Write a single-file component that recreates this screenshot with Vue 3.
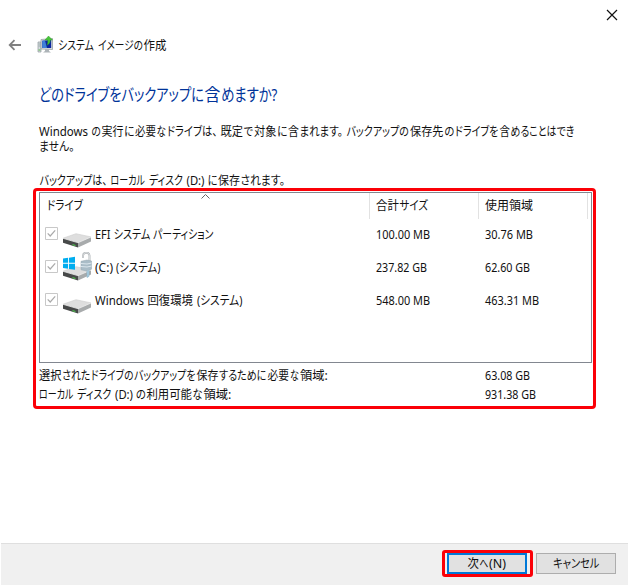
<script setup>
import { h } from 'vue'

// A run of text pieces: [x, width, text], condensed to the widths of the UI font.
const isLatin = (t) => /^[\x20-\x7e]+$/.test(t)
const Line = (props) =>
  h('svg', { class: 'line', width: props.width, height: props.height },
    [h('text', { y: props.base }, props.parts.map(([x, w, t]) =>
      h('tspan', { class: isLatin(t) ? 'latin' : 'jp', x, textLength: isLatin(t) ? w : w - 0.6, lengthAdjust: 'spacingAndGlyphs' }, t)))])
Line.props = ['parts', 'width', 'height', 'base']

const title = [[1, 36.5, 'システム'], [41, 45.5, 'イメージの'], [86.5, 23.5, '作成']]
const heading = [[0, 165.5, 'どのドライブをバックアップに'], [165.5, 16.5, '含'], [182, 57, 'めますか?']]
const intro1 = [
  [0, 49, 'Windows'], [52.5, 10, 'の'], [62.5, 22.5, '実行'], [85, 11, 'に'], [96, 21.5, '必要'],
  [117.5, 10, 'な'], [128, 51, 'ドライブは、'], [181.5, 23, '既定'], [204.5, 10, 'で'], [215, 23, '対象'],
  [238, 11, 'に'], [249, 11.5, '含'], [260.5, 44, 'まれます。'], [307.5, 63, 'バックアップの'], [371, 34, '保存先'],
  [405.5, 10.5, 'の'], [416, 44, 'ドライブを'], [460.5, 11, '含'], [471.5, 64.5, 'めることはでき'],
]
const intro2 = [[0, 36, 'ません。']]
const target = [
  [0.5, 68.5, 'バックアップは、'], [71.5, 35, 'ローカル'], [110, 34.5, 'ディスク'], [147.5, 18, '(D:)'],
  [168.5, 10.5, 'に'], [179, 22.5, '保存'], [201.5, 45, 'されます。'],
]
const headers = [
  [[0, 36.5, 'ドライブ']],
  [[-1, 23.5, '合計'], [22.5, 29, 'サイズ']],
  [[-1, 48.5, '使用領域']],
]
const drives = [
  { parts: [[0, 15.5, 'EFI'], [18.5, 37.5, 'システム'], [58, 61, 'パーティション']], size: '100.00 MB', sw: 54, used: '30.76 MB', uw: 48, os: false },
  { parts: [[0, 18, '(C:)'], [21, 45, '(システム)']], size: '237.82 GB', sw: 51, used: '62.60 GB', uw: 45, os: true },
  { parts: [[0, 49, 'Windows'], [52.5, 46, '回復環境'], [102, 46, '(システム)']], size: '548.00 MB', sw: 54, used: '463.31 MB', uw: 54, os: false },
]
const totals = [
  {
    parts: [
      [0, 23, '選択'], [23, 29, 'された'], [52, 43, 'ドライブの'], [95, 62, 'バックアップを'],
      [157.5, 22.5, '保存'], [180, 48, 'するために'], [228.5, 22, '必要'], [251, 9.5, 'な'], [261, 28.5, '領域:'],
    ],
    value: '63.08 GB', w: 45,
  },
  {
    parts: [
      [0, 35, 'ローカル'], [38, 35, 'ディスク'], [76, 18, '(D:)'], [97, 10.5, 'の'],
      [107.5, 46, '利用可能'], [153.5, 10.5, 'な'], [164.5, 28.5, '領域:'],
    ],
    value: '931.38 GB', w: 51,
  },
]
</script>

<template>
  <div class="window">
    <div class="caption">
      <svg width="12" height="12" viewBox="0 0 12 12"><path d="M1 1 11 11M11 1 1 11" stroke="#111" stroke-width="1.2" /></svg>
    </div>
    <header class="nav">
      <svg class="back" width="14" height="12" viewBox="0 0 14 12"><path d="M13 6H2M6.5 1.2 1.7 6l4.8 4.8" fill="none" stroke="#808080" stroke-width="1.8" /></svg>
      <svg class="app" width="17" height="18" viewBox="0 0 17 18">
        <path d="M1 6h3v10H1z" fill="#d5dadd" stroke="#8f999e" stroke-width=".7" />
        <path d="M1.5 8h2M1.5 10h2" stroke="#9aa" />
        <path d="M1.5 14h2" stroke="#58b947" />
        <path d="M4 3.5 15.5 2.5v11L4 13z" fill="#d9dcdd" stroke="#8d969a" stroke-width=".7" />
        <path d="M5.2 4.7 14.2 4v8H5.2z" fill="#0b25a0" />
        <path d="M5.2 4.7 8 4.5 10 12H5.2z" fill="#3f80d8" />
        <path d="M8 13h4v2l2 1.5H6L8 15z" fill="#adb4b8" />
        <path d="M11.5 0 15.5 4H13.3c0 2.5-1 4.3-3.4 5.2 1-1.6.9-3.2.8-5.2H8z" fill="#48c53b" stroke="#269421" stroke-width=".4" />
      </svg>
      <Line :parts="title" width="120" height="20" base="15" />
    </header>

    <main class="content">
      <h1><Line :parts="heading" width="260" height="26" base="18.5" /></h1>
      <p class="intro">
        <Line :parts="intro1" width="545" height="14" base="11" />
        <Line :parts="intro2" width="545" height="14" base="12" />
      </p>
      <p class="target"><Line :parts="target" width="300" height="16" base="11" /></p>
    </main>

    <section class="panel">
      <div class="list">
        <div class="row head">
          <div v-for="(c, i) in headers" :key="i" class="cell"><Line :parts="c" width="60" height="20" base="14" /></div>
          <svg class="sort" width="9" height="5" viewBox="0 0 9 5"><path d="M.5 4.5l4-4 4 4" fill="none" stroke="#666" /></svg>
        </div>
        <div v-for="d in drives" :key="d.size" class="row">
          <div class="drive">
            <svg class="check" width="13" height="13" viewBox="0 0 13 13"><path d="M.5.5h12v12H.5z" fill="#fff" stroke="#c8c8c8" /><path d="M2.7 6.4 5.2 9l5-5.7" fill="none" stroke="#aaa" stroke-width="1.2" /></svg>
            <svg class="disk" width="32" height="32" viewBox="0 0 32 32">
              <path d="M1 19.2 14 14.7l15 3.2-13 5.7z" fill="#dedede" />
              <path d="M1 19.2 14 14.7l15 3.2" fill="none" stroke="#cbcbcb" stroke-width=".6" />
              <path d="M1 19.2 16 23.6v4.9L1 23.8z" fill="#474949" />
              <path d="M16 23.6 29 17.9v4.6l-13 6z" fill="#a8abac" />
              <path d="M1 19.3 16 23.7 29 18" fill="none" stroke="#efefef" stroke-width=".8" />
              <path d="M10.5 25l3 .9v1.2l-3-.9z" fill="#4cc54b" />
              <g v-if="d.os">
                <path d="M1 6.5 6.1 5.8v5H1zm6-.8 6-.9v6H7zM1 11.7h5.1v5L1 16zm6 0h6v6l-6-.8z" fill="#00adef" />
                <path d="M21 6V4c0-4.5 6.5-4.5 6.5 0v5" fill="none" stroke="#b4b9bc" stroke-width="2" />
                <path d="M21 6V4c0-4.5 6.5-4.5 6.5 0v5" fill="none" stroke="#e8eaeb" stroke-width=".7" />
                <path d="M19 9.3 25 8l4.5 1v8.2L25 19l-6-1.2z" fill="#a9bcc7" stroke="#94a6b1" stroke-width=".5" />
                <path d="M19 11.5l6 .5 4.5-1M19 14.5l6 .5 4.5-1" fill="none" stroke="#dce7ee" />
                <path d="M25 19v6.5l2-1.2V18" fill="#afd2e4" stroke="#7fabc3" stroke-width=".6" />
              </g>
            </svg>
            <Line :parts="d.parts" width="200" height="20" base="15" />
          </div>
          <div class="value"><Line :parts="[[0, d.sw, d.size]]" width="60" height="20" base="15" /></div>
          <div class="value"><Line :parts="[[0, d.uw, d.used]]" width="60" height="20" base="15" /></div>
        </div>
      </div>
      <div class="totals">
        <div v-for="t in totals" :key="t.value" class="total">
          <Line :parts="t.parts" width="446" height="19" base="14" />
          <Line :parts="[[0, t.w, t.value]]" width="60" height="19" base="14" />
        </div>
      </div>
    </section>

    <footer class="actions">
      <div class="mark">
        <button class="btn next"><Line :parts="[[-0.5, 12, '次'], [11.5, 9.5, 'へ'], [21, 17, '(N)']]" width="39" height="17" base="13" /></button>
      </div>
      <button class="btn"><Line :parts="[[0, 47, 'キャンセル']]" width="46" height="17" base="13" /></button>
    </footer>
  </div>
</template>

<style>
body { background: #fff; }
.line { display: block; flex: none; fill: currentColor; overflow: visible; }
.line .jp { font-size: 1.04em; }
</style>

<style scoped>
.window { width: 628px; height: 585px; display: flex; flex-direction: column; box-sizing: border-box; background: #fff; color: #111; overflow: hidden; font: 12px "Noto Sans", "Noto Sans CJK JP", sans-serif; font-feature-settings: "palt"; }
svg { display: block; flex: none; }
.caption { height: 30px; flex: none; display: flex; justify-content: flex-end; align-items: center; padding-right: 10px; box-sizing: border-box; }
.nav { height: 30px; flex: none; display: flex; align-items: center; padding-left: 8px; }
.app { margin: 0 4px 0 15px; }
.nav .line { margin-left: -1px; }
.content { height: 128px; flex: none; padding-left: 39px; padding-top: 22px; box-sizing: border-box; }
h1, p { margin: 0; }
h1 { height: 43px; font-size: 16px; font-weight: 400; color: #003399; }
.intro { height: 49px; }
.panel { flex: none; margin-left: 33px; width: 563px; height: 221px; box-sizing: border-box; border: 3px solid #fb0007; border-radius: 4px; padding: 1px 0 0 3px; }
.list { width: 553px; height: 171px; box-sizing: border-box; border: 1px solid #828790; }
.row { display: grid; grid-template-columns: 336px 109px 1fr; height: 33px; }
.head { grid-template-columns: 330px 109px 109px; height: 26px; position: relative; }
.cell { box-sizing: border-box; padding: 3px 0 0 7px; border-right: 1px solid #e2e2e2; }
.sort { position: absolute; left: 161px; top: 1px; }
.drive { display: flex; padding-left: 5px; }
.check { margin-top: 8px; }
.disk { margin: 0 1px 0 4px; }
.drive .line, .value .line { margin-top: 5px; }
.totals { padding-top: 3px; }
.total { display: flex; height: 19px; }
.actions { margin: auto 0 0 1px; height: 42px; flex: none; box-sizing: border-box; border-top: 1px solid #dfdfdf; background: #f0f0f0; display: flex; justify-content: flex-end; align-items: flex-start; gap: 3px; padding: 6px 12px 0 0; }
.mark { width: 91px; height: 27px; box-sizing: border-box; border: 3px solid #fb0007; border-radius: 3px; padding: 0 0 0 2px; }
.btn { width: 80px; height: 21px; box-sizing: border-box; margin: 3px 0 0; padding: 0; border: 1px solid #adadad; background: #e1e1e1; color: #111; font: inherit; font-feature-settings: inherit; display: flex; justify-content: center; align-items: center; }
.next { margin: 0; border: 2px solid #0078d7; }
</style>
